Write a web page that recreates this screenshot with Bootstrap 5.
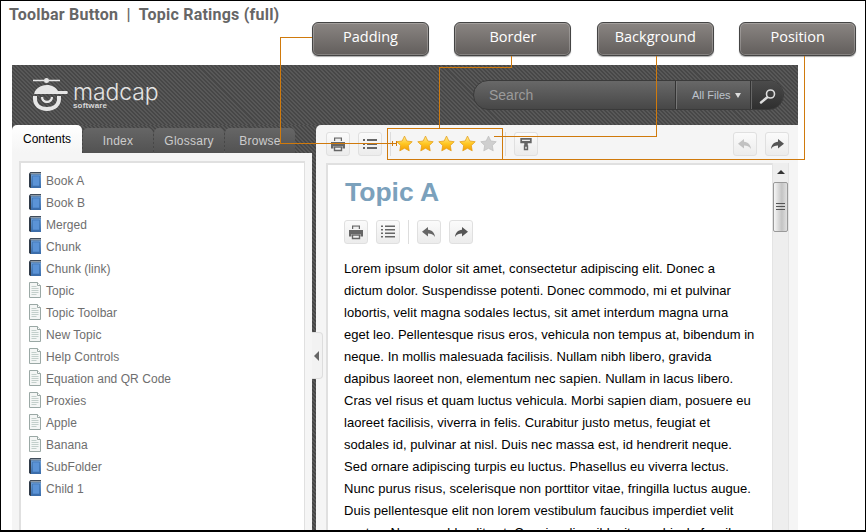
<!DOCTYPE html>
<html lang="en">
<head>
<meta charset="UTF-8">
<title>Toolbar Button | Topic Ratings (full)</title>
<link href="https://cdn.jsdelivr.net/npm/bootstrap@5.3.0/dist/css/bootstrap.min.css" rel="stylesheet">
<style>
html, body { margin: 0; background: #fff; }
.shot-frame { position: relative; width: 866px; height: 532px; overflow: hidden; font-family: "Liberation Sans", Arial, sans-serif; font-size: 12px; }
.shot-frame::after { content: ""; position: absolute; inset: 0; border: 1px solid #000; border-width: 1px 1px 2px 1px; pointer-events: none; z-index: 9; }
.shot-title { height: 22px; padding: 5px 0 0 9px; font: bold 16px/19px Roboto, sans-serif; letter-spacing: .22px; color: #666; white-space: nowrap; }
.callout-row { height: 43px; gap: 25.4px; padding-left: 312px; }
.callout { width: 117px; height: 34px; border-radius: 6px; border: 1px solid #444; background: linear-gradient(#8a8582, #625e5c); box-shadow: inset 0 0 0 1px rgba(255,255,255,.22), 0 1px 1px #aaa; color: #fff; font: 14.5px/28px "Open Sans", sans-serif; text-align: center; }
.app-head { margin-left: 12px; width: 786px; height: 60px; padding: 0 14px 0 0; background: repeating-linear-gradient(45deg, #474747 0 1.42px, #585858 1.42px 2.84px); }
.logo-box { padding-left: 21px; gap: 4px; color: #e4e4e4; }
.logo-word { font: 300 23px/19px "Inter", sans-serif; letter-spacing: -.1px; margin-top: 2px; }
.logo-soft { font: bold 8px/7px "Liberation Sans", sans-serif; letter-spacing: .15px; color: #d8d8d8; }
.search-box { width: 311px; height: 30px; border-radius: 15px; border: 1px solid #3a3a3a; background: linear-gradient(#686868, #474747); overflow: hidden; }
.search-text { width: 202px; padding-left: 15px; font-size: 14px; color: #9b9b9b; line-height: 28px; border-right: 1px solid #333; }
.search-scope { width: 75px; padding-left: 15px; gap: 4px; font-size: 11px; color: #bdc3cc; line-height: 28px; border-left: 1px solid #777; border-right: 1px solid #333; }
.search-scope i { width: 0; height: 0; border: 3.5px solid transparent; border-top: 5px solid #ddd; border-bottom: 0; }
.search-go { flex: 1; background: linear-gradient(#4b4b4b, #2f2f2f); border-left: 1px solid #666; padding-left: 7px; padding-top: 6px; }
.app-body { margin-left: 12px; width: 786px; height: 500px; background: repeating-linear-gradient(45deg, #474747 0 1.42px, #585858 1.42px 2.84px); }
.left-side { width: 300px; position: relative; }
.tab-row { height: 28px; gap: 1px; border: 0; flex-wrap: nowrap; }
.tab-row .nav-link { width: 70px; height: 25px; margin-top: 3px; padding: 6px 0 0; border: 0; border-radius: 5px 5px 0 0; background: linear-gradient(#666, #525252); color: #ccc; font-size: 12px; line-height: 15px; text-align: center; letter-spacing: .25px; }
.tab-row .nav-link.active { height: 28px; margin-top: 0; padding-top: 7px; background: linear-gradient(#fff, #f5f5f5); color: #000; letter-spacing: 0; }
.toc-panel { height: 400px; background: #f5f5f5; padding: 8px 7px 0; }
.toc-box { height: 400px; background: #fff; border: 1px solid #e0e0e0; border-width: 2px 1px 1px 2px; padding: 9px 0 0 8px; }
.toc-item { height: 22px; gap: 5px; font-size: 12px; line-height: 18px; color: #6e6e6e; letter-spacing: .05px; }
.panel-grip { position: absolute; right: -11px; top: 207px; width: 11px; height: 47px; background: #f2f2f2; border: 1px solid #ddd; border-left: 0; border-radius: 0 4px 4px 0; }
.panel-grip i { position: absolute; left: 2px; top: 18px; border: 5px solid transparent; border-right: 5px solid #666; border-left: 0; }
.main-side { margin-left: 4px; width: 482px; background: #f5f5f5; border-radius: 5px 0 0 0; }
.tool-row { height: 38px; padding: 7px 9px 0 10px; }
.tool-btn { width: 24px; height: 24px; padding: 0; border: 1px solid #e0e0e0; border-radius: 3px; background: linear-gradient(#fbfbfb, #ececec); line-height: 20px; display: inline-flex; align-items: center; justify-content: center; flex: none; }
.tool-btn.is-off svg { opacity: .35; }
.tool-sep { width: 1px; height: 24px; background: #ddd; margin: 0 8px; flex: none; }
.star-set { width: 111px; flex: none; margin-left: -5px; margin-top: 1px; }
.star-set svg { width: 21px; height: 20px; flex: none; }
.star-set + .tool-sep { margin-left: 0; }
.page-wrap { height: 400px; }
.page-box { width: 446px; height: 400px; margin-left: 10px; background: #fff; border: 1px solid #e0e0e0; border-width: 2px 0 0 2px; padding: 12px 0 0 16px; overflow: hidden; flex: none; }
.page-head { font-weight: bold; font-size: 26.500px; line-height: 30px; color: #7ba1bc; margin: 0 0 13px 1px; }
.page-tools { height: 24px; margin-bottom: 14px; }
.page-copy { font-size: 13px; line-height: 22px; letter-spacing: .04px; color: #000; white-space: nowrap; margin: 0; }
.scroll-col { width: 17px; background: #eee; border: 1px solid #e4e4e4; border-width: 0 1px; position: relative; flex: none; }
.scroll-col i { position: absolute; left: 4px; top: 7px; border: 4px solid transparent; border-bottom: 4px solid #333; border-top: 0; }
.scroll-thumb { position: absolute; left: 0; top: 19px; width: 15px; height: 50px; border: 1px solid #999; border-radius: 2px; background: linear-gradient(90deg, #f6f6f6, #c4c4c4 60%, #e0e0e0); padding: 20px 2px 0; }
.scroll-thumb b { display: block; height: 1px; margin-bottom: 2px; background: #555; }
.note-lines { position: absolute; left: 0; top: 0; z-index: 5; pointer-events: none; }
</style>
</head>
<body>
<svg width="0" height="0" class="position-absolute">
  <defs>
    <linearGradient id="starGold" x1="0" y1="0" x2="0" y2="1"><stop offset="0" stop-color="#ffedA0"/><stop offset=".5" stop-color="#ffc825"/><stop offset="1" stop-color="#f59c00"/></linearGradient>
    <linearGradient id="bookBlue" x1="0" y1="0" x2="0" y2="1"><stop offset="0" stop-color="#6d9fd6"/><stop offset="1" stop-color="#3a6ba8"/></linearGradient>
    <symbol id="ico-star" viewBox="-1 -1.200 23 22"><path d="M10.500 2.200l2.600 5.400 5.900.8-4.300 4.100 1 5.900-5.200-2.800-5.200 2.800 1-5.900L2 8.400l5.900-.8z" fill="url(#starGold)" stroke="#e39a10" stroke-width=".8"/></symbol>
    <symbol id="ico-star-off" viewBox="-1 -1.200 23 22"><path d="M10.500 2.200l2.600 5.400 5.900.8-4.300 4.100 1 5.900-5.200-2.800-5.200 2.800 1-5.900L2 8.400l5.900-.8z" fill="#cfcfcf" stroke="#bdbdbd" stroke-width=".8"/></symbol>
    <symbol id="ico-print" viewBox="0 0 16 16"><path d="M4 1.500h8V5H4zM1 6h14v6.500h-2.500V10h-9v2.500H1z" fill="#666"/><path d="M4.500 11h7v3.500h-7z" fill="none" stroke="#666" stroke-width="1.400"/><path d="M5.200 2.600h5.600V5H5.200z" fill="#eee"/></symbol>
    <symbol id="ico-list" viewBox="0 0 16 16"><path d="M1 3h2v2H1zM5 3h10v2H5zM1 7h2v2H1zM5 7h10v2H5zM1 11h2v2H1zM5 11h10v2H5z" fill="#666"/></symbol>
    <symbol id="ico-list-dense" viewBox="0 0 16 16"><path d="M1 1.500h2v1.600H1zM5 1.500h10v1.600H5zM1 5h2v1.600H1zM5 5h10v1.600H5zM1 8.500h2v1.600H1zM5 8.500h10v1.600H5zM1 12h2v1.600H1zM5 12h10v1.600H5z" fill="#666"/></symbol>
    <symbol id="ico-back" viewBox="0 0 16 16"><path d="M7 3L1 7.800l6 4.700V9.600c3 0 5.300.8 7 3.400-.4-4.300-2.800-7-7-7.300z" fill="#666"/></symbol>
    <symbol id="ico-next" viewBox="0 0 16 16"><path d="M9 3l6 4.800-6 4.700V9.600c-3 0-5.300.8-7 3.400.4-4.300 2.800-7 7-7.300z" fill="#555"/></symbol>
    <symbol id="ico-roller" viewBox="0 0 16 16"><path d="M1.500 1h13v6h-13zM6 7h4v2.500H6zM5.500 9.500h5V15h-5z" fill="#666"/><path d="M3.500 3h9v1.600h-9zM7.200 11h1.600v2.500H7.200z" fill="#eee"/></symbol>
    <symbol id="ico-book" viewBox="0 0 12 16"><path d="M0 1.500L1.500 0H12v16H1.500L0 15z" fill="#2f3a48"/><path d="M1.500 .8H12v1.500H1.500z" fill="#8c9aa8"/><path d="M2 2.300h10V16H2z" fill="url(#bookBlue)"/><path d="M3.500 4h7v10h-7z" fill="#5b93d6" stroke="#356aa8" stroke-width=".5"/></symbol>
    <symbol id="ico-doc" viewBox="0 0 12 16"><path d="M.5.500h8L11.500 3.500v12H.5z" fill="#f4f6f5" stroke="#9aa8a5"/><path d="M8.500.500v3h3" fill="#fff" stroke="#9aa8a5"/><path d="M2.500 4.500h5M2.500 6.500h7M2.500 8.500h7M2.500 10.500h7M2.500 12.500h5" stroke="#c3cfcb"/></symbol>
  </defs>
</svg>

<div class="shot-frame">
  <div class="shot-title">Toolbar Button&nbsp; |&nbsp; Topic Ratings (full)</div>
  <div class="callout-row d-flex">
    <div class="callout">Padding</div>
    <div class="callout">Border</div>
    <div class="callout">Background</div>
    <div class="callout">Position</div>
  </div>

  <header class="app-head d-flex align-items-center justify-content-between">
    <div class="logo-box d-flex align-items-center">
      <svg width="36" height="36" viewBox="0 0 36 36">
        <path d="M0 3.500h11M16 3.500h11" stroke="#e6e6e6" stroke-width="1.500"/>
        <circle cx="13.500" cy="3.500" r="2.500" fill="#e6e6e6"/>
        <path d="M1 19c0-7 6-11 13-11 5 0 9 2.500 11 6h9c1 0 1 3 0 3H1z" fill="#e6e6e6"/>
        <path d="M0 19v3c0 7 6 12 14 12s14-5 14-12v-3h-4v3c0 5-4 8-10 8S4 27 4 22v-3z" fill="#e6e6e6"/>
        <path d="M8 20c0 4 3 6 6 6s6-2 6-6h-2.200c0 2.500-1.800 3.800-3.800 3.800s-3.800-1.300-3.800-3.800z" fill="#e6e6e6"/>
      </svg>
      <div>
        <div class="logo-word">madcap</div>
        <div class="logo-soft">software</div>
      </div>
    </div>
    <div class="search-box d-flex">
      <div class="search-text">Search</div>
      <div class="search-scope d-flex align-items-center">All Files <i></i></div>
      <div class="search-go">
        <svg width="17" height="15" viewBox="0 0 17 15"><circle cx="11.500" cy="5" r="4" fill="none" stroke="#ddd" stroke-width="1.600"/><path d="M8 8.500l-6 5" stroke="#ddd" stroke-width="2.400" stroke-linecap="round"/></svg>
      </div>
    </div>
  </header>

  <div class="app-body d-flex">
    <div class="left-side flex-shrink-0">
      <ul class="nav tab-row">
        <li class="nav-item"><a class="nav-link active" href="#">Contents</a></li>
        <li class="nav-item"><a class="nav-link" href="#">Index</a></li>
        <li class="nav-item"><a class="nav-link" href="#">Glossary</a></li>
        <li class="nav-item"><a class="nav-link" href="#">Browse</a></li>
      </ul>
      <div class="toc-panel">
        <div class="toc-box">
          <div class="toc-item d-flex"><svg width="12" height="16"><use href="#ico-book"/></svg>Book A</div>
          <div class="toc-item d-flex"><svg width="12" height="16"><use href="#ico-book"/></svg>Book B</div>
          <div class="toc-item d-flex"><svg width="12" height="16"><use href="#ico-book"/></svg>Merged</div>
          <div class="toc-item d-flex"><svg width="12" height="16"><use href="#ico-book"/></svg>Chunk</div>
          <div class="toc-item d-flex"><svg width="12" height="16"><use href="#ico-book"/></svg>Chunk (link)</div>
          <div class="toc-item d-flex"><svg width="12" height="16"><use href="#ico-doc"/></svg>Topic</div>
          <div class="toc-item d-flex"><svg width="12" height="16"><use href="#ico-doc"/></svg>Topic Toolbar</div>
          <div class="toc-item d-flex"><svg width="12" height="16"><use href="#ico-doc"/></svg>New Topic</div>
          <div class="toc-item d-flex"><svg width="12" height="16"><use href="#ico-doc"/></svg>Help Controls</div>
          <div class="toc-item d-flex"><svg width="12" height="16"><use href="#ico-doc"/></svg>Equation and QR Code</div>
          <div class="toc-item d-flex"><svg width="12" height="16"><use href="#ico-doc"/></svg>Proxies</div>
          <div class="toc-item d-flex"><svg width="12" height="16"><use href="#ico-doc"/></svg>Apple</div>
          <div class="toc-item d-flex"><svg width="12" height="16"><use href="#ico-doc"/></svg>Banana</div>
          <div class="toc-item d-flex"><svg width="12" height="16"><use href="#ico-book"/></svg>SubFolder</div>
          <div class="toc-item d-flex"><svg width="12" height="16"><use href="#ico-book"/></svg>Child 1</div>
        </div>
      </div>
      <div class="panel-grip"><i></i></div>
    </div>

    <div class="main-side">
      <div class="tool-row d-flex">
        <button class="btn tool-btn"><svg width="16" height="16"><use href="#ico-print"/></svg></button>
        <button class="btn tool-btn ms-2"><svg width="16" height="16"><use href="#ico-list"/></svg></button>
        <span class="tool-sep"></span>
        <div class="star-set d-flex">
          <svg><use href="#ico-star"/></svg>
          <svg><use href="#ico-star"/></svg>
          <svg><use href="#ico-star"/></svg>
          <svg><use href="#ico-star"/></svg>
          <svg><use href="#ico-star-off"/></svg>
        </div>
        <span class="tool-sep"></span>
        <button class="btn tool-btn"><svg width="14" height="14"><use href="#ico-roller"/></svg></button>
        <button class="btn tool-btn is-off ms-auto"><svg width="16" height="16"><use href="#ico-back"/></svg></button>
        <button class="btn tool-btn ms-2"><svg width="16" height="16"><use href="#ico-next"/></svg></button>
      </div>
      <div class="page-wrap d-flex">
        <div class="page-box">
          <h1 class="page-head">Topic A</h1>
          <div class="page-tools d-flex">
            <button class="btn tool-btn"><svg width="16" height="16"><use href="#ico-print"/></svg></button>
            <button class="btn tool-btn ms-2"><svg width="16" height="16"><use href="#ico-list-dense"/></svg></button>
            <span class="tool-sep"></span>
            <button class="btn tool-btn"><svg width="16" height="16"><use href="#ico-back"/></svg></button>
            <button class="btn tool-btn ms-2"><svg width="16" height="16"><use href="#ico-next"/></svg></button>
          </div>
          <p class="page-copy">Lorem ipsum dolor sit amet, consectetur adipiscing elit. Donec a<br>
dictum dolor. Suspendisse potenti. Donec commodo, mi et pulvinar<br>
lobortis, velit magna sodales lectus, sit amet interdum magna urna<br>
eget leo. Pellentesque risus eros, vehicula non tempus at, bibendum in<br>
neque. In mollis malesuada facilisis. Nullam nibh libero, gravida<br>
dapibus laoreet non, elementum nec sapien. Nullam in lacus libero.<br>
Cras vel risus et quam luctus vehicula. Morbi sapien diam, posuere eu<br>
laoreet facilisis, viverra in felis. Curabitur justo metus, feugiat et<br>
sodales id, pulvinar at nisl. Duis nec massa est, id hendrerit neque.<br>
Sed ornare adipiscing turpis eu luctus. Phasellus eu viverra lectus.<br>
Nunc purus risus, scelerisque non porttitor vitae, fringilla luctus augue.<br>
Duis pellentesque elit non lorem vestibulum faucibus imperdiet velit<br>
quates. Nam non blandit est. Cras iaculis, nibh vitae vehicula faucibus</p>
        </div>
        <div class="scroll-col"><i></i><div class="scroll-thumb"><b></b><b></b><b></b></div></div>
      </div>
    </div>
  </div>

  <svg class="note-lines" width="866" height="532" fill="none" stroke="#d07a0c" stroke-width="1" shape-rendering="crispEdges">
    <path d="M312 37.500H280.500V143.500H396M392.500 141v5M396.500 141v5"/>
    <path d="M511.500 56V67.500H439.500V128"/>
    <path d="M656.500 56V136.500H494"/>
    <path d="M387.500 128.500H502.500V159.500H387.500Z"/>
    <path d="M804.500 56V159.500H502"/>
  </svg>
</div>
<script src="https://cdn.jsdelivr.net/npm/bootstrap@5.3.0/dist/js/bootstrap.bundle.min.js"></script>
</body>
</html>
